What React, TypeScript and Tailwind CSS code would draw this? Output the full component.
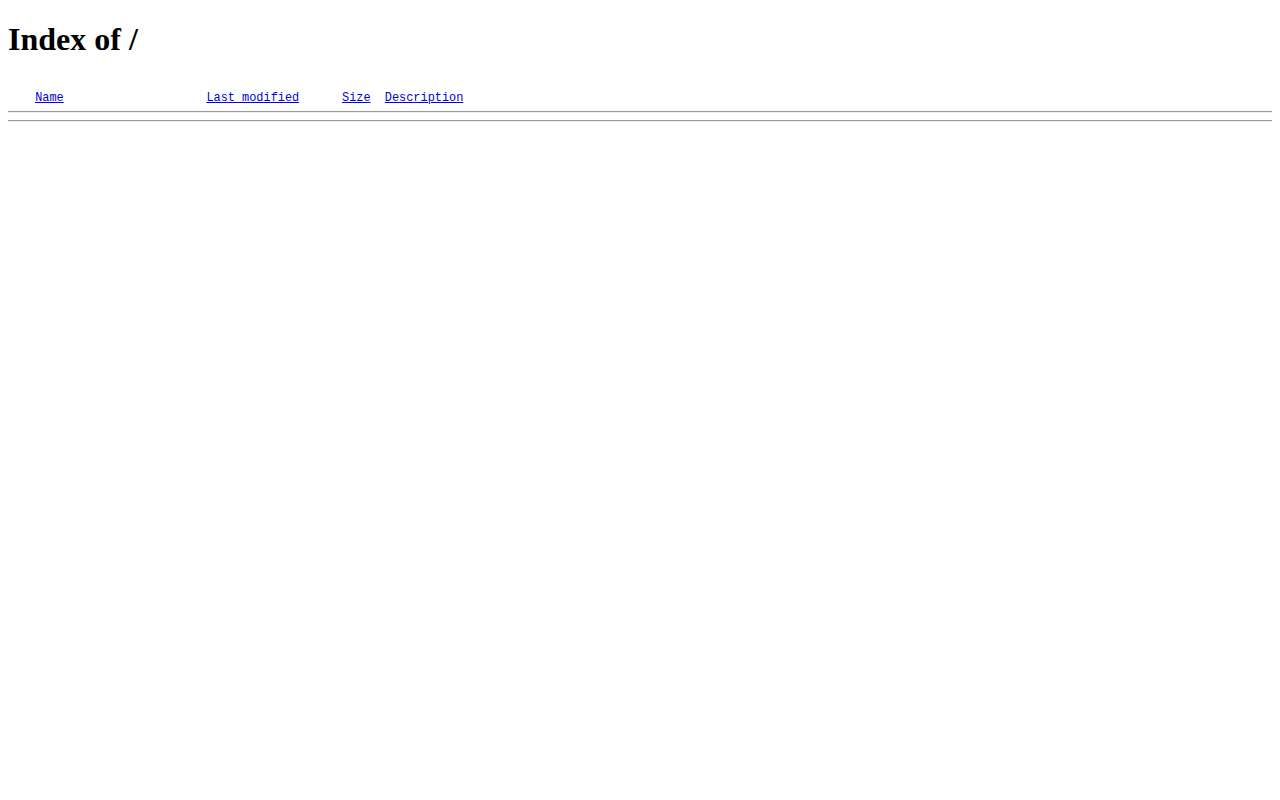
import React from "react";

export default function App() {
  return (
    <div className="min-h-screen bg-white px-2 py-[0.1px] text-black">
      <h1 className="mt-[20.44px] mb-[21.44px] font-['Liberation_Serif',serif] text-[32px] font-bold leading-[37px]">
        Index of /
      </h1>
      <pre className="my-[13px] font-['Liberation_Mono',monospace] text-[11.9px] leading-[15px] whitespace-pre">
        <span className="inline-block h-[22px] w-[20px] align-baseline"></span>{" "}
        <a href="#" className="text-[#0000ee] underline">Name</a>
        {"                    "}
        <a href="#" className="text-[#0000ee] underline">Last modified</a>
        {"      "}
        <a href="#" className="text-[#0000ee] underline">Size</a>
        {"  "}
        <a href="#" className="text-[#0000ee] underline">Description</a>
        <hr className="mt-[5px] mb-[7px] h-0 border-t border-b border-t-[#9a9a9a] border-b-[#eeeeee]" />
        <hr className="mt-[7px] mb-[6px] h-0 border-t border-b border-t-[#9a9a9a] border-b-[#eeeeee]" />
      </pre>
    </div>
  );
}
